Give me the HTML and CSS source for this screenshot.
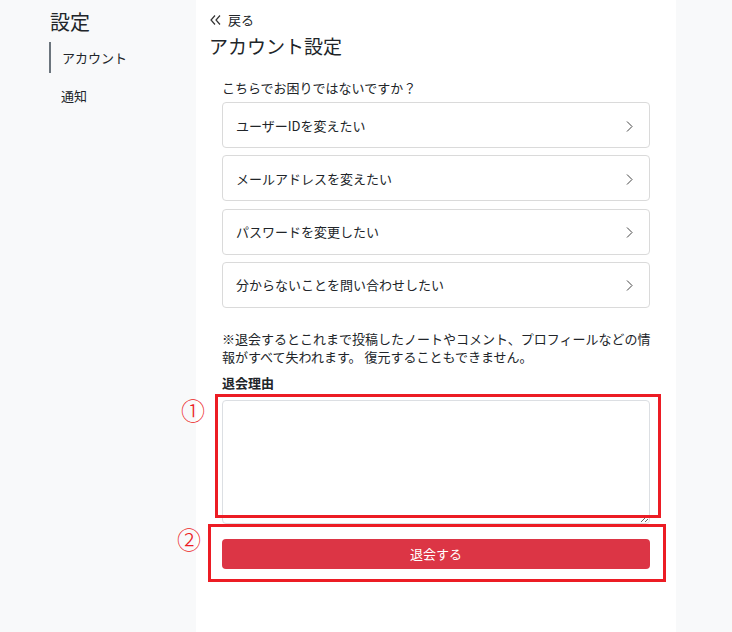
FILE: index.html
```html
<!DOCTYPE html>
<html lang="ja">
<head>
<meta charset="utf-8">
<title>アカウント設定</title>
<link rel="stylesheet" href="styles.css">
</head>
<body>
<div class="page">
  <aside class="sidebar">
    <h1 class="side-title">設定</h1>
    <nav class="side-nav">
      <a class="side-item active">アカウント</a>
      <a class="side-item">通知</a>
    </nav>
  </aside>
  <main class="main">
    <a class="back">
      <svg class="back-icon" width="11" height="10" viewBox="0 0 11 10"><polyline points="5,0.5 1,5 5,9.5" fill="none" stroke="#333" stroke-width="1.2"/><polyline points="10,0.5 6,5 10,9.5" fill="none" stroke="#333" stroke-width="1.2"/></svg>
      <span>戻る</span>
    </a>
    <h2 class="title">アカウント設定</h2>
    <section class="content">
      <p class="help">こちらでお困りではないですか？</p>
      <ul class="cards">
        <li class="card"><span>ユーザーIDを変えたい</span><svg class="chev" width="7" height="11" viewBox="0 0 7 11"><polyline points="1,0.5 6,5.5 1,10.5" fill="none" stroke="#444" stroke-width="1"/></svg></li>
        <li class="card"><span>メールアドレスを変えたい</span><svg class="chev" width="7" height="11" viewBox="0 0 7 11"><polyline points="1,0.5 6,5.5 1,10.5" fill="none" stroke="#444" stroke-width="1"/></svg></li>
        <li class="card"><span>パスワードを変更したい</span><svg class="chev" width="7" height="11" viewBox="0 0 7 11"><polyline points="1,0.5 6,5.5 1,10.5" fill="none" stroke="#444" stroke-width="1"/></svg></li>
        <li class="card"><span>分からないことを問い合わせしたい</span><svg class="chev" width="7" height="11" viewBox="0 0 7 11"><polyline points="1,0.5 6,5.5 1,10.5" fill="none" stroke="#444" stroke-width="1"/></svg></li>
      </ul>
      <p class="warn">※退会するとこれまで投稿したノートやコメント、プロフィールなどの情<br>報がすべて失われます。 復元することもできません。</p>
      <label class="label" for="reason">退会理由</label>
      <textarea id="reason" class="reason"></textarea>
      <button class="withdraw">退会する</button>
    </section>
    <div class="mark mark-1"></div>
    <div class="mark mark-2"></div>
    <span class="num num-1">①</span>
    <span class="num num-2">②</span>
  </main>
  <div class="rest"></div>
</div>
</body>
</html>
```
FILE: styles.css
```css
* { box-sizing: border-box; }
html, body { margin: 0; padding: 0; }
body {
  font-family: "Noto Sans CJK JP", "Noto Sans", sans-serif;
  color: #212529;
  background: #f8f9fa;
  font-size: 13px;
}
.page {
  display: flex;
  width: 732px;
  height: 632px;
}
.sidebar {
  width: 196px;
  flex: none;
  background: #f8f9fa;
  padding: 9px 0 0 49px;
}
.side-title {
  margin: 0;
  font-size: 20px;
  font-weight: 400;
  line-height: 25px;
  padding-left: 1px;
}
.side-nav {
  margin-top: 8px;
  display: flex;
  flex-direction: column;
  gap: 7px;
}
.side-item {
  display: block;
  height: 31px;
  line-height: 31px;
  padding-left: 10px;
  border-left: 2px solid transparent;
  font-size: 13px;
  color: #212529;
}
.side-item.active {
  border-left-color: #6c757d;
  padding-left: 11px;
}
.main {
  position: relative;
  width: 480px;
  flex: none;
  background: #fff;
  padding: 10px 26px 0 13px;
}
.rest { flex: 1; background: #f8f9fa; }
.back {
  display: flex;
  align-items: center;
  gap: 7px;
  height: 19px;
  font-size: 13px;
  color: #212529;
  padding-left: 1px;
}
.back-icon { display: block; }
.title {
  margin: 5px 0 0;
  font-size: 19px;
  font-weight: 400;
  line-height: 24px;
}
.content {
  padding-left: 13px;
}
.help {
  margin: 20px 0 0;
  line-height: 19px;
}
.cards {
  list-style: none;
  margin: 5px 0 0;
  padding: 0;
  display: flex;
  flex-direction: column;
  gap: 7.33px;
}
.card {
  height: 46px;
  border: 1px solid #dadada;
  border-radius: 4px;
  display: flex;
  align-items: center;
  justify-content: space-between;
  padding: 0 16px 0 13px;
}
.chev { display: block; margin-top: 2px; }
.warn {
  margin: 22px 0 0;
  line-height: 18px;
  white-space: nowrap;
}
.label {
  display: block;
  margin-top: 8px;
  font-weight: 700;
  line-height: 18px;
}
.reason {
  display: block;
  margin-top: 8px;
  width: 428px;
  height: 124px;
  border: 1px solid #dcdfe3;
  border-radius: 4px;
  background: #fff;
  resize: both;
}
.withdraw {
  display: block;
  margin-top: 15px;
  width: 428px;
  height: 30px;
  border: 0;
  border-radius: 4px;
  background: #dc3545;
  color: #fff;
  font-family: inherit;
  font-size: 13px;
}
.mark {
  position: absolute;
  border: 3px solid #ec1c24;
}
.mark-1 { left: 19px; top: 394px; width: 446px; height: 124px; }
.mark-2 { left: 12px; top: 524px; width: 458px; height: 58px; }
.num {
  position: absolute;
  color: #ec1c24;
  font-size: 24px;
  line-height: 24px;
  font-weight: 300;
}
.num-1 { left: -15px; top: 398px; }
.num-2 { left: -19px; top: 527px; }
```
